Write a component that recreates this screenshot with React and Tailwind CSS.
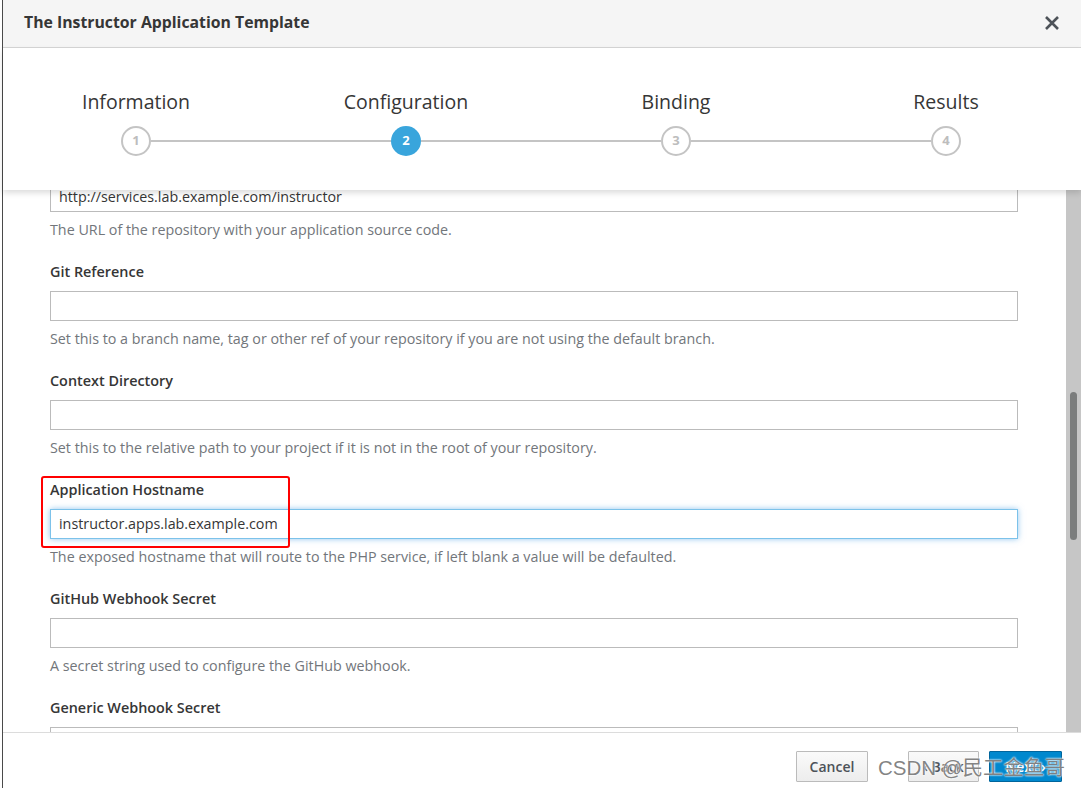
import React from "react";

const steps = [
  { label: "Information", n: 1 },
  { label: "Configuration", n: 2, active: true },
  { label: "Binding", n: 3 },
  { label: "Results", n: 4 },
];

const fields = [
  { label: "Git Reference", help: "Set this to a branch name, tag or other ref of your repository if you are not using the default branch." },
  { label: "Context Directory", help: "Set this to the relative path to your project if it is not in the root of your repository." },
  { label: "Application Hostname", value: "instructor.apps.lab.example.com", focus: true, help: "The exposed hostname that will route to the PHP service, if left blank a value will be defaulted." },
  { label: "GitHub Webhook Secret", help: "A secret string used to configure the GitHub webhook." },
  { label: "Generic Webhook Secret", help: "" },
];

function Input({ value, focus }) {
  return (
    <div
      className={
        "h-[30px] w-full flex items-center px-[8px] text-[14.3px] text-[#363636] bg-white border " +
        (focus
          ? "border-[#7cc2ea] shadow-[0_0_6px_rgba(102,175,233,0.7)]"
          : "border-[#bbbbbb]")
      }
    >
      {value}
    </div>
  );
}

export default function App() {
  return (
    <div className="w-[1081px] h-[788px] bg-white relative overflow-hidden font-['Open_Sans',sans-serif]">
      <div className="h-full ml-[2px] border-l border-[#4a4a4a] flex flex-col">
        {/* header */}
        <div className="h-[48px] shrink-0 bg-[#f5f5f5] border-b border-[#d6d6d6] flex items-center justify-between pl-[21px] pr-[21px] pb-[2px]">
          <div className="text-[15.8px] font-bold text-[#363636]">The Instructor Application Template</div>
          <svg width="16" height="16" viewBox="0 0 16 16" className="mt-[1px]">
            <path d="M2 2 L14 14 M14 2 L2 14" stroke="#4d5258" strokeWidth="2.6" strokeLinecap="butt" />
          </svg>
        </div>
        {/* steps */}
        <div className="h-[142px] shrink-0 bg-white relative z-10 shadow-[0_3px_6px_rgba(0,0,0,0.14)]">
          <div className="grid grid-cols-4 ml-[-2px] pt-[40px]">
            {steps.map((s, i) => (
              <div key={s.n} className="flex flex-col items-center">
                <div className="text-[19.5px] leading-[28px] text-[#363636]">{s.label}</div>
                <div className="w-full flex items-center mt-[10px]">
                  <div className={"flex-1 h-[2px] " + (i === 0 ? "bg-transparent" : "bg-[#c4c4c4]")} />
                  <div
                    className={
                      "w-[30px] h-[30px] rounded-full flex items-center justify-center text-[13px] font-bold " +
                      (s.active
                        ? "bg-[#39a5dc] text-white"
                        : "border-2 border-[#c4c4c4] text-[#bdbdbd] bg-white")
                    }
                  >
                    {s.n}
                  </div>
                  <div className={"flex-1 h-[2px] " + (i === 3 ? "bg-transparent" : "bg-[#c4c4c4]")} />
                </div>
              </div>
            ))}
          </div>
        </div>
        {/* content */}
        <div className="flex-1 flex overflow-hidden">
          <div className="flex-1 overflow-hidden pl-[47px] pr-[48px]">
            <div className="mt-[-8px]">
              <div className="h-[30px] w-full flex items-center px-[8px] text-[14.3px] text-[#363636] border border-[#bbbbbb]">
                http://services.lab.example.com/instructor
              </div>
              <div className="mt-[8px] text-[14.3px] leading-[20px] text-[#72767b]">
                The URL of the repository with your application source code.
              </div>
              {fields.map((f) => (
                <div key={f.label} className="mt-[22px]">
                  <div className="text-[14.4px] leading-[20px] font-semibold text-[#363636]">{f.label}</div>
                  <div className="mt-[9px]">
                    <Input value={f.value} focus={f.focus} />
                  </div>
                  <div className="mt-[8px] h-[20px] text-[14.3px] leading-[20px] text-[#72767b]">{f.help}</div>
                </div>
              ))}
            </div>
          </div>
          <div className="w-[15px] shrink-0 bg-[#c6c6c6] flex flex-col items-center">
            <div className="h-[202px] shrink-0" />
            <div className="w-[7px] h-[148px] rounded-full bg-[#7b7d7d]" />
          </div>
        </div>
        {/* footer */}
        <div className="h-[56px] shrink-0 border-t border-[#dcdcdc] bg-white flex items-start justify-end pt-[18px] pr-[19px]">
          <div className="w-[72px] h-[31px] border border-[#bbbbbb] rounded-[1px] bg-gradient-to-b from-[#fafafa] to-[#ededed] flex items-center justify-center text-[14px] font-semibold text-[#4d5258]">
            Cancel
          </div>
          <div className="ml-[40px] w-[71px] h-[31px] border border-[#bbbbbb] rounded-[1px] bg-gradient-to-b from-[#fafafa] to-[#ededed] flex items-center justify-center text-[14px] font-semibold text-[#4d5258]">
            ‹ Back
          </div>
          <div className="ml-[10px] w-[73px] h-[31px] border border-[#00659c] rounded-[1px] bg-[#0088ce] flex items-center justify-center text-[14px] font-semibold text-white">
            Next ›
          </div>
        </div>
      </div>
      {/* highlight box */}
      <div className="absolute left-[41px] top-[476px] w-[249px] h-[72px] border-2 border-[#ff0000] rounded-[3px]" />
      {/* watermark */}
      <div className="absolute left-[878px] top-[754px] text-[20.5px] leading-[28px] text-[rgba(110,110,110,0.85)] font-['Liberation_Sans','Noto_Sans_CJK_SC',sans-serif] [text-shadow:0_0_2px_white,0_0_2px_white]">
        CSDN @民工金鱼哥
      </div>
    </div>
  );
}
